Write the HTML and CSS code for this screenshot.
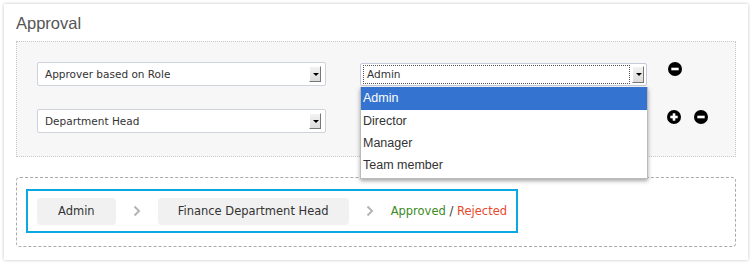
FILE: index.html
```html
<!DOCTYPE html>
<html>
<head>
<meta charset="utf-8">
<link rel="stylesheet" href="styles.css">
</head>
<body>
<div class="card">
  <h2 class="title">Approval</h2>
  <div class="panel">
    <div class="row">
      <div class="select"><span>Approver based on Role</span><i class="arrow"></i></div>
      <div class="select-wrap">
        <div class="select focus"><span>Admin</span><i class="arrow"></i></div>
        <ul class="menu">
          <li class="active">Admin</li>
          <li>Director</li>
          <li>Manager</li>
          <li>Team member</li>
        </ul>
      </div>
      <div class="icons">
        <svg class="ico" viewBox="0 0 14 14"><circle cx="7" cy="7" r="7" fill="#000"/><rect x="3.3" y="5.7" width="7.4" height="2.6" fill="#fff"/></svg>
      </div>
    </div>
    <div class="row">
      <div class="select"><span>Department Head</span><i class="arrow"></i></div>
      <div class="spacer"></div>
      <div class="icons">
        <svg class="ico" viewBox="0 0 14 14"><circle cx="7" cy="7" r="7" fill="#000"/><rect x="3.3" y="5.7" width="7.4" height="2.6" fill="#fff"/><rect x="5.7" y="3.3" width="2.6" height="7.4" fill="#fff"/></svg>
        <svg class="ico" viewBox="0 0 14 14"><circle cx="7" cy="7" r="7" fill="#000"/><rect x="3.3" y="5.7" width="7.4" height="2.6" fill="#fff"/></svg>
      </div>
    </div>
  </div>
  <div class="flow-box">
    <div class="flow">
      <span class="chip chip-admin">Admin</span>
      <svg class="chev" viewBox="0 0 8 12"><polyline points="1.5,1.5 6,6 1.5,10.5" fill="none" stroke="#b5b5b5" stroke-width="2"/></svg>
      <span class="chip">Finance Department Head</span>
      <svg class="chev" viewBox="0 0 8 12"><polyline points="1.5,1.5 6,6 1.5,10.5" fill="none" stroke="#b5b5b5" stroke-width="2"/></svg>
      <span class="result"><span class="ok">Approved</span> / <span class="no">Rejected</span></span>
    </div>
  </div>
</div>
</body>
</html>
```
FILE: styles.css
```css
html, body { margin: 0; padding: 0; background: #fff; }
body { padding: 4px; }
.card {
  width: 744px; height: 256px; box-sizing: border-box;
  background: #fff;
  box-shadow: 0 0 3px rgba(0,0,0,0.25);
  padding: 9px 12px 0 12px;
  font-family: "DejaVu Sans", Verdana, sans-serif;
}
.title {
  margin: 0; font-family: "Liberation Sans", Arial, sans-serif;
  font-weight: normal; font-size: 16.5px; line-height: 20px; color: #555;
  height: 28px;
}
.panel {
  width: 720px; height: 116px; box-sizing: border-box;
  border: 1px dotted #c8c8c8; background: #f7f7f7;
  padding: 20px 0 0 20px;
  display: flex; flex-direction: column; gap: 23px;
}
.row { display: flex; align-items: flex-start; }
.select {
  width: 289px; height: 24px; box-sizing: border-box;
  border: 1px solid #cfd3dc; background: #fff; border-radius: 2px;
  display: flex; align-items: center; justify-content: space-between;
  padding: 0 4px 0 7px;
  font-size: 10.5px; color: #333;
}
.arrow {
  width: 12px; height: 16px; box-sizing: border-box;
  background: linear-gradient(#f2f2f2, #dcdcdc);
  border-right: 1px solid #777; border-bottom: 1px solid #777;
  border-top: 1px solid #fff; border-left: 1px solid #fff;
  position: relative;
}
.arrow::after {
  content: ""; position: absolute; left: 3px; top: 6px;
  border-left: 3px solid transparent; border-right: 3px solid transparent;
  border-top: 3px solid #000;
}
.select-wrap { position: relative; margin-left: 34px; width: 288px; }
.select.focus {
  width: 287px; height: 23px; margin-top: 1px;
  padding: 0 2px 0 2px; border-color: #c5cbd8;
}
.select.focus span {
  flex: 1; border: 1px dotted #555; height: 17px; line-height: 17px;
  padding-left: 3px; margin-right: 2px;
}
.select.focus .arrow { height: 17px; }
.spacer { width: 322px; }
.menu {
  position: absolute; left: 0; top: 25px; width: 288px;
  margin: 0; padding: 0 0 2px 0; list-style: none;
  background: #fff; border: 1px solid #bbb; border-top: none;
  box-shadow: 0 2px 4px rgba(0,0,0,0.35);
  font-family: "Liberation Sans", Arial, sans-serif; font-size: 12.5px; color: #333;
  z-index: 5; box-sizing: border-box;
}
.menu li { height: 22px; line-height: 22px; padding-left: 2px; }
.menu li.active { background: #3474d0; color: #fff; height: 23px; line-height: 23px; }
.icons { display: flex; gap: 13px; margin-left: 20px; margin-top: 0; }
.ico { width: 14px; height: 14px; display: block; }
.row:nth-child(2) .icons { margin-left: 19px; margin-top: 1px; }
.flow-box {
  margin-top: 20px; width: 720px; height: 70px; box-sizing: border-box;
  border: 1px dashed #aaa; border-radius: 4px;
  padding: 11px 0 0 9px;
}
.flow {
  width: 492px; height: 44px; box-sizing: border-box;
  border: 2px solid #0aa8e2;
  display: flex; align-items: center; padding-left: 9px;
  white-space: nowrap;
}
.chip {
  flex-shrink: 0;
  background: #f1f1f1; border-radius: 4px; height: 27px; line-height: 27px;
  padding: 0 20px; font-size: 11.5px; color: #333;
}
.chip-admin { padding: 0 21px; }
.chev { width: 8px; height: 12px; margin: 0 17px; flex-shrink: 0; }
.result { font-size: 11.5px; color: #333; }
.ok { color: #3c8a23; }
.no { color: #e8492c; }
```
